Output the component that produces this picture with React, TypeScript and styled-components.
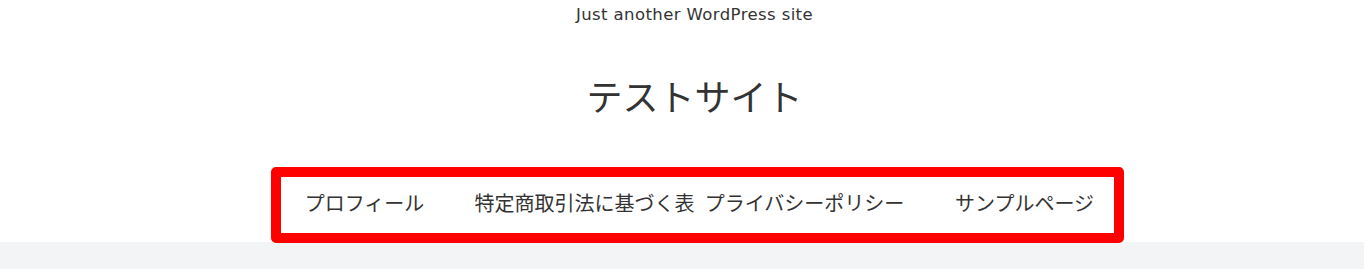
import styled, { createGlobalStyle } from 'styled-components';

const GlobalStyle = createGlobalStyle`
  html, body {
    margin: 0;
    padding: 0;
    background: #fff;
  }
  body {
    font-family: "DejaVu Sans", "Noto Sans CJK JP", sans-serif;
    color: #333;
  }
`;

const Header = styled.header`
  display: flex;
  flex-direction: column;
  align-items: center;
  padding-left: 25px;
  background: #fff;
`;

const Tagline = styled.p`
  margin: 0;
  height: 30px;
  line-height: 30px;
  font-size: 16.5px;
  letter-spacing: 0.4px;
  color: #333;
`;

const SiteTitle = styled.h1`
  margin: 40px 0 0;
  line-height: 50px;
  font-size: 36px;
  font-weight: 400;
  font-family: "Noto Sans CJK JP", sans-serif;
  color: #333;
`;

const NavWrap = styled.div`
  margin-top: 47px;
  margin-bottom: -1px;
  padding-left: 5px;
  position: relative;
  z-index: 1;
`;

const NavBox = styled.nav`
  box-sizing: border-box;
  width: 853px;
  height: 76px;
  padding-right: 5px;
  border: 10px solid #ff0000;
  border-radius: 5px;
  background: #fff;
  display: grid;
  align-items: center;
`;

const Menu = styled.ul`
  list-style: none;
  margin: 0 -26px;
  padding: 0 0 4px;
  display: grid;
  grid-template-columns: repeat(4, 220px);
`;

const MenuItem = styled.li`
  text-align: center;
  font-family: "Noto Sans CJK JP", sans-serif;
  font-size: 20px;
  line-height: 30px;
  color: #333;
  white-space: nowrap;
`;

const Content = styled.main`
  background: #f3f4f5;
  height: 27px;
`;

const items = ['プロフィール', '特定商取引法に基づく表', 'プライバシーポリシー', 'サンプルページ'];

const App = () => {
  return (
    <>
      <GlobalStyle />
      <Header>
        <Tagline>Just another WordPress site</Tagline>
        <SiteTitle>テストサイト</SiteTitle>
        <NavWrap>
          <NavBox>
            <Menu>
              {items.map((label) => (
                <MenuItem key={label}>{label}</MenuItem>
              ))}
            </Menu>
          </NavBox>
        </NavWrap>
      </Header>
      <Content />
    </>
  );
};

export default App;
